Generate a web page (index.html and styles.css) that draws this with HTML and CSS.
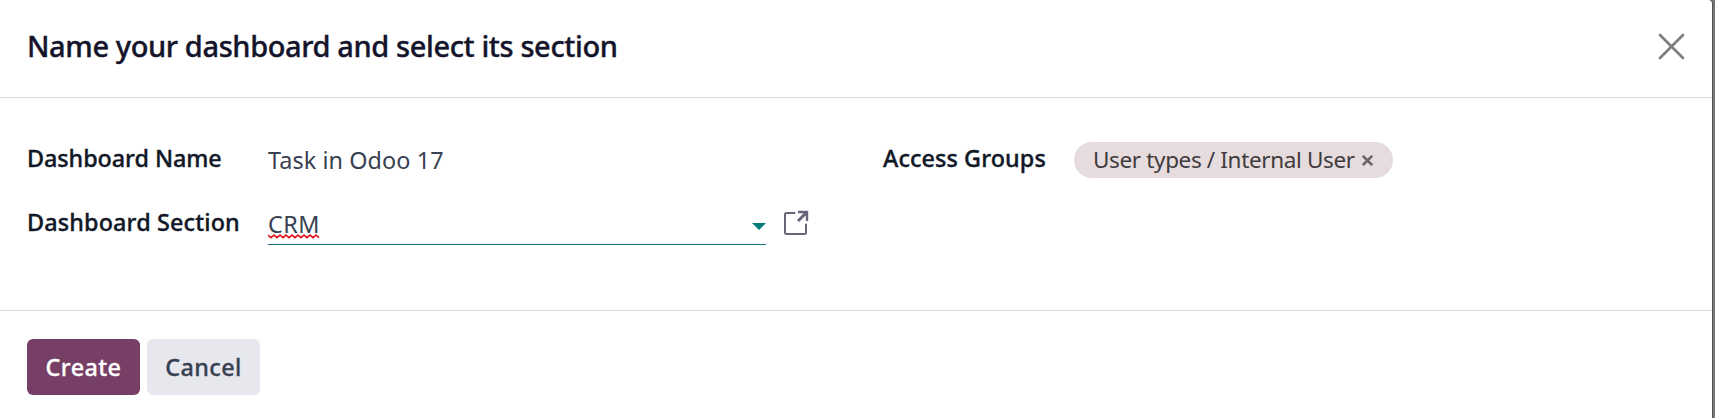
FILE: index.html
```html
<!DOCTYPE html>
<html lang="en">
<head>
<meta charset="utf-8">
<title>Name your dashboard</title>
<link rel="stylesheet" href="styles.css">
</head>
<body>
<div class="backdrop">
  <section class="dialog">
    <header class="header">
      <h1 class="title">Name your dashboard and select its section</h1>
      <button class="close" aria-label="Close"><svg width="27" height="27" viewBox="0 0 27 27"><path d="M2 2 25 25M25 2 2 25" fill="none" stroke="#7f7f7f" stroke-width="2.8" stroke-linecap="round"/></svg></button>
    </header>
    <main class="body">
      <div class="group group-main">
        <label class="label l-name">Dashboard Name</label>
        <div class="value">Task in Odoo 17</div>
        <label class="label l-section">Dashboard Section</label>
        <div class="picker">
          <div class="select"><span class="crm">CRM<svg class="squiggle" width="52" height="5" viewBox="0 0 52 5"><path d="M0 1.2 3 3.6 6 1.2 9 3.6 12 1.2 15 3.6 18 1.2 21 3.6 24 1.2 27 3.6 30 1.2 33 3.6 36 1.2 39 3.6 42 1.2 45 3.6 48 1.2 51 3.6" fill="none" stroke="#e0161c" stroke-width="1.7"/></svg></span><svg class="caret" width="14" height="7" viewBox="0 0 14 7"><path d="M0 0H14L7 7Z" fill="#017e7c"/></svg></div>
          <svg class="external" width="27" height="27" viewBox="0 0 27 27" fill="none" stroke="#66667a" stroke-width="2"><path d="M11.500 4H3.500Q2 4 2 5.500V23.500Q2 25 3.500 25H21.500Q23 25 23 23.500V15.500" stroke-linecap="round"/><path d="M15 12 23.500 3.500" stroke-width="3"/><path d="M15 3H24V12" stroke-width="2.400"/><path d="M19 3H24V8Z" fill="#66667a" stroke="none"/></svg>
        </div>
      </div>
      <div class="group group-access">
        <label class="label l-access">Access Groups</label>
        <div class="tag"><span class="tag-text">User types / Internal User</span><svg width="13" height="13" viewBox="0 0 13 13"><path d="M1.800 1.800 11.200 11.200M11.200 1.800 1.800 11.200" stroke="#6b6264" stroke-width="2.600"/></svg></div>
      </div>
    </main>
    <footer class="footer">
      <button class="btn primary">Create</button>
      <button class="btn secondary">Cancel</button>
    </footer>
  </section>
</div>
</body>
</html>
```
FILE: styles.css
```css
* { box-sizing: border-box; }
body { margin: 0; font-family: "Noto Sans", "Open Sans", sans-serif; font-size: 23.4px; color: #374151; }
.backdrop { height: 418px; padding-right: 3px; background: #777; overflow: hidden; }
.dialog { height: 418px; display: flex; flex-direction: column; background: #fff; box-shadow: 1px 0 #555; border-top-right-radius: 4px; white-space: nowrap; }
.header { flex: none; height: 98px; display: flex; align-items: center; justify-content: space-between; padding: 0 27px 4px 27px; border-bottom: 1px solid #d9dadd; }
.title { margin: 0; padding-bottom: 2px; font-size: 29px; font-weight: 500; line-height: 40px; color: #14142b; letter-spacing: -.39px; -webkit-text-stroke: .35px; }
.close { display: flex; padding: 0; border: 0; background: none; }
.body { flex: none; height: 212px; display: flex; padding: 44px 27px 0; }
.group { display: grid; align-content: start; }
.group-main { grid-template-columns: 241px 543px; grid-template-rows: 64px 64px; margin-right: 72px; }
.group-access { grid-template-columns: 191px auto; }
.label { font-weight: 500; line-height: 32px; color: #111827; -webkit-text-stroke: .35px; }
.l-name { letter-spacing: -.08px; }
.l-section { letter-spacing: .13px; }
.l-access { letter-spacing: .08px; }
.value { line-height: 36px; letter-spacing: .08px; }
.picker { display: flex; align-items: flex-start; }
.select { width: 498px; height: 39px; display: flex; align-items: flex-start; justify-content: space-between; line-height: 36px; border-bottom: 1px solid #176f78; }
.crm { position: relative; letter-spacing: .5px; }
.squiggle { position: absolute; left: 0; top: 28px; }
.caret { margin-top: 17px; }
.external { margin: 3px 0 0 17px; }
.tag { height: 36px; width: 319px; display: flex; align-items: center; justify-content: space-between; padding: 0 19px; border-radius: 18px; background: #e6dcdd; color: #3e3a3d; font-size: 22.5px; letter-spacing: -.36px; }
.tag-text { padding-bottom: 2px; }
.footer { flex: 1; display: flex; gap: 7px; padding: 28px 27px; border-top: 1px solid #d9dadd; }
.btn { width: 113px; height: 56px; padding: 0; border: 0; border-radius: 6px; font: 500 23.4px "Noto Sans", "Open Sans", sans-serif; letter-spacing: .4px; -webkit-text-stroke: .3px; }
.primary { background: #773f66; color: #fff; }
.secondary { background: #e7e8ed; color: #374151; }
```
